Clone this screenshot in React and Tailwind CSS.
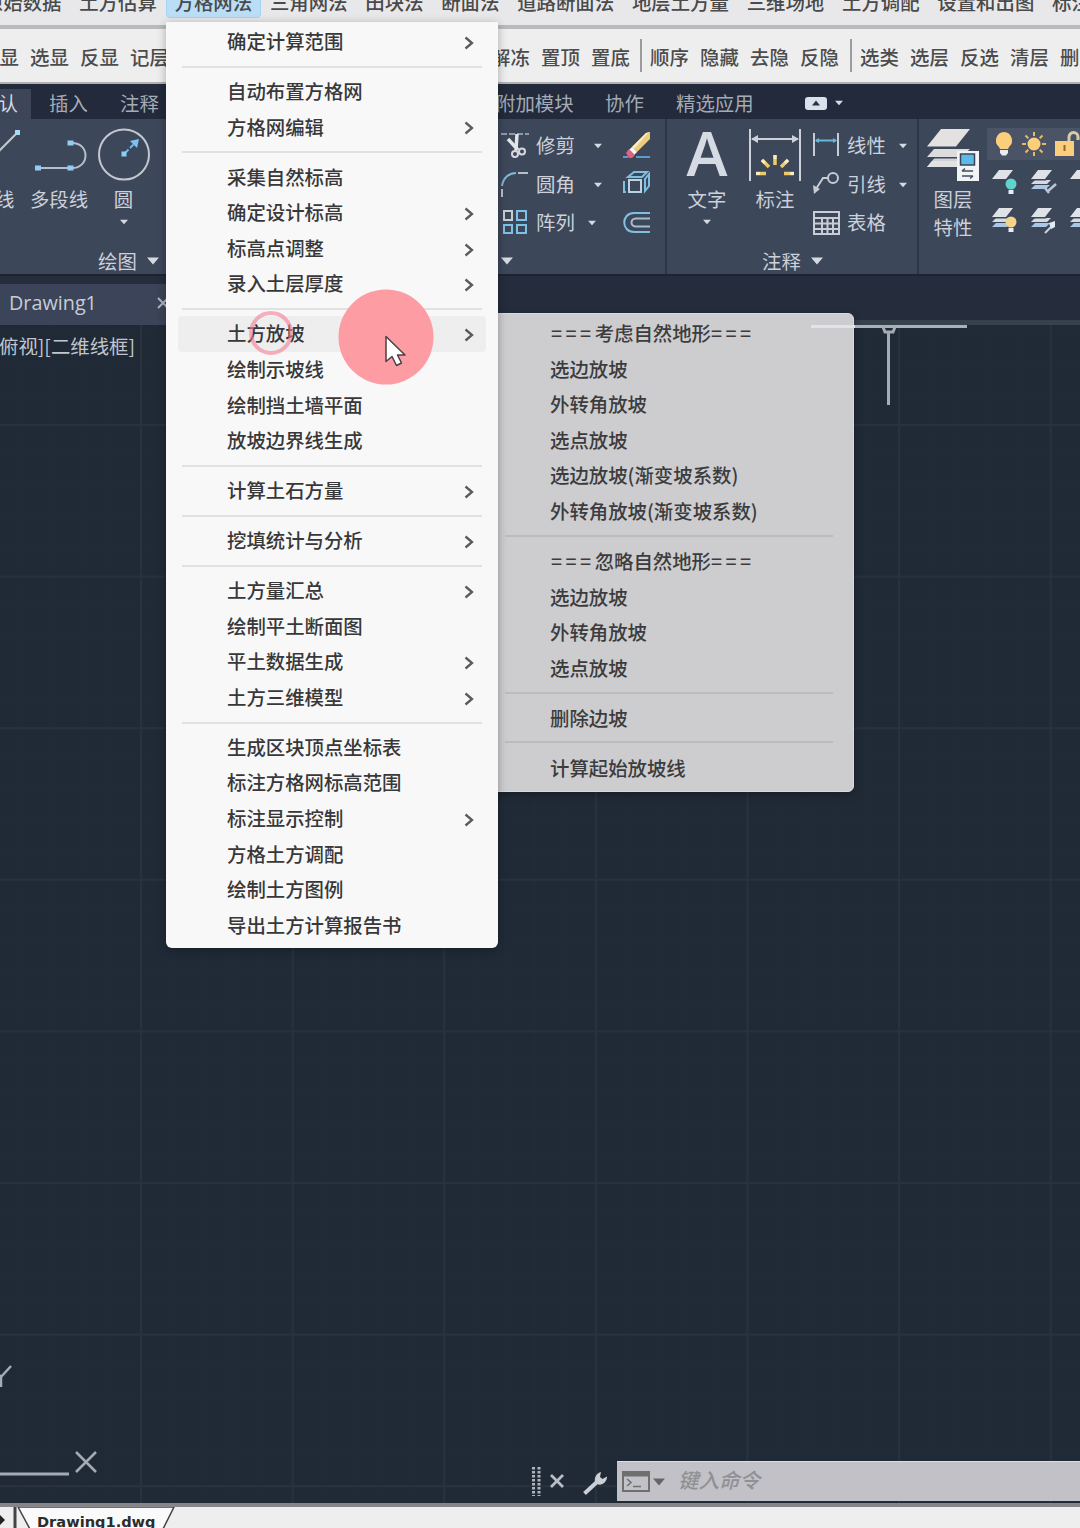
import React from 'react';
import clsx from 'clsx';

const menuBar = [
  '原始数据', '土方估算', '方格网法', '三角网法', '田块法', '断面法',
  '道路断面法', '地层土方量', '三维场地', '土方调配', '设置和出图', '标注',
];

const toolGroups = [
  { id: 'show', className: '-ml-5 w-[511px]', items: ['全显', '选显', '反显', '记层'] },
  { id: 'freeze', className: 'w-[149px]', items: ['解冻', '置顶', '置底'] },
  { id: 'hide', className: 'w-[210px] border-l-2', items: ['顺序', '隐藏', '去隐', '反隐'] },
  { id: 'layer', className: 'w-[260px] border-l-2', items: ['选类', '选层', '反选', '清层', '删除'] },
];

// each inner array is a block between two separators, "sub" rows open a submenu
const gridMenu = [
  [{ label: '确定计算范围', sub: true }],
  [{ label: '自动布置方格网' }, { label: '方格网编辑', sub: true }],
  [
    { label: '采集自然标高' },
    { label: '确定设计标高', sub: true },
    { label: '标高点调整', sub: true },
    { label: '录入土层厚度', sub: true },
  ],
  [
    { label: '土方放坡', sub: true, active: true },
    { label: '绘制示坡线' },
    { label: '绘制挡土墙平面' },
    { label: '放坡边界线生成' },
  ],
  [{ label: '计算土石方量', sub: true }],
  [{ label: '挖填统计与分析', sub: true }],
  [
    { label: '土方量汇总', sub: true },
    { label: '绘制平土断面图' },
    { label: '平土数据生成', sub: true },
    { label: '土方三维模型', sub: true },
  ],
  [
    { label: '生成区块顶点坐标表' },
    { label: '标注方格网标高范围' },
    { label: '标注显示控制', sub: true },
    { label: '方格土方调配' },
    { label: '绘制土方图例' },
    { label: '导出土方计算报告书' },
  ],
];

const slopeMenu = [
  { title: '考虑自然地形', items: ['选边放坡', '外转角放坡', '选点放坡', '选边放坡(渐变坡系数)', '外转角放坡(渐变坡系数)'] },
  { title: '忽略自然地形', items: ['选边放坡', '外转角放坡', '选点放坡'] },
  { items: ['删除边坡'] },
  { items: ['计算起始放坡线'] },
];

const Caret = ({ big, className }) => (
  <svg className={clsx('shrink-0', className)} width={big ? 12 : 8} height={big ? 8 : 6} viewBox="0 0 12 8">
    <path d="M0 0.5h12L6 7.5z" fill="#d5dae2" />
  </svg>
);

const MenuBar = () => (
  <div className="flex h-[25px] overflow-hidden bg-[#e8e8ea] font-medium text-[#4a4a4a]">
    <div className="-mt-[14px] -ml-[25px] flex h-8 shrink-0">
      {menuBar.map((name) => (
        <div
          key={name}
          className={clsx(
            'flex shrink-0 items-center border px-[7.9px]',
            name === '方格网法' ? 'rounded border-[#a5d3f0] bg-[#b9def6]' : 'border-transparent'
          )}
        >
          {name}
        </div>
      ))}
    </div>
  </div>
);

const ToolBar = () => (
  <div className="flex h-[59px] items-center overflow-hidden border-t-4 border-b-2 border-t-[#bababa] border-b-[#b0b0b2] bg-[#eeeeef] font-medium text-[#4c4c4c]">
    {toolGroups.map((group) => (
      <div key={group.id} className={clsx('flex h-[33px] shrink-0 items-center border-[#9c9c9e]', group.className)}>
        {group.className.includes('border-l-2') && <div className="w-2 shrink-0" />}
        {group.items.map((item) => (
          <div key={item} className="w-[50px] shrink-0 pt-[2px]">{item}</div>
        ))}
      </div>
    ))}
  </div>
);

const RibbonTabs = () => (
  <div className="flex h-[35px] items-end overflow-hidden bg-[#222a3b] text-[#a5abb6]">
    <div className="-ml-[21px] flex h-[30px] w-[52px] shrink-0 items-center bg-[#3d4558] pb-0.5 text-[#d5d9e0]">默认</div>
    <div className="flex h-[30px] items-center pb-0.5">
      <div className="ml-[18px] w-[71px]">插入</div>
      <div className="w-[376px]">注释</div>
      <div className="w-[109px]">附加模块</div>
      <div className="w-[71px]">协作</div>
      <div className="w-[129px]">精选应用</div>
      <svg width="22" height="13" viewBox="0 0 22 13">
        <rect width="22" height="13" rx="3" fill="#d9e2ec" />
        <path d="M7 8.5h8l-4-5z" fill="#2a3345" />
      </svg>
      <Caret className="ml-2" />
    </div>
  </div>
);

const PanelFooter = ({ label, className }) => (
  <div className={clsx('mt-auto flex h-[27px] items-center gap-2.5', className)}>
    {label}
    <Caret big />
  </div>
);

const BigButton = ({ icon, label, caret, className }) => (
  <div className={clsx('flex shrink-0 flex-col items-center', className)}>
    <div className="flex h-[54px] items-center">{icon}</div>
    <div className="mt-[3px] leading-[28px] whitespace-nowrap">{label}</div>
    {caret && <Caret className="mt-1.5" />}
  </div>
);

const LineIcon = () => (
  <svg width="54" height="54" viewBox="-32 0 54 54" fill="none">
    <path d="M-14 36L17 5" stroke="#c3c8d0" strokeWidth="2" />
    <rect x="15" y="2" width="5" height="5" fill="#a9d8f5" />
  </svg>
);

const PolylineIcon = () => (
  <svg width="56" height="54" viewBox="0 0 56 54" fill="none">
    <path d="M6 40h32M41 15c18 0 18 25 0 25" stroke="#b7bec9" strokeWidth="2" />
    <path d="M4 37.500h6v5h-6zM36.500 37.500h6v5h-6zM36.500 12.500h6v5h-6z" fill="#8fcdf5" />
  </svg>
);

const CircleIcon = () => (
  <svg width="54" height="54" viewBox="0 0 54 54" fill="none">
    <circle cx="27" cy="26.500" r="25" stroke="#c3c8d0" strokeWidth="2" />
    <path d="M28 25l9-9" stroke="#6fb7ea" strokeWidth="2" strokeDasharray="5 2" />
    <path d="M33 13l9-2-2 9z" fill="#7cc3f2" />
    <rect x="24.500" y="23.500" width="5" height="5" fill="#8fcdf5" />
  </svg>
);

const TextIcon = () => (
  <span className="pb-[6px] font-['Open_Sans','Noto_Sans',sans-serif] text-[62px] leading-[54px] font-semibold text-[#d6dae3]">A</span>
);

const DimensionIcon = () => (
  <svg width="52" height="54" viewBox="0 0 52 54" fill="none">
    <path d="M1 1v52M51 1v52M3 11h46" stroke="#ccd1da" strokeWidth="2" />
    <path d="M2 11l7-4v8zM50 11l-7-4v8z" fill="#ccd1da" />
    <path d="M26 27v10M13 32l7 7M39 32l-7 7M7 45.500h10M35 45.500h10" stroke="#eecb68" strokeWidth="3.500" />
    <path d="M26 27v4M13 32l3 3M39 32l-3 3M7 45.500h4M41 45.500h4" stroke="#f8ecc0" strokeWidth="3" />
  </svg>
);

const LayerPropsIcon = () => (
  <svg width="54" height="54" viewBox="0 0 54 54">
    <path d="M1 39l10-12h34L32 39z" fill="#cfd2d6" />
    <path d="M1 39l5-6h34l-7 6z" fill="#e2e2e2" />
    <path d="M1 30.500l8-9h36l-9 9z" fill="#3d475a" />
    <path d="M1 29l7-8h36l-9 8z" fill="#dcdcdc" />
    <path d="M1 21L15 1h30L31 21z" fill="#3d475a" />
    <path d="M1 18.500L15 1h29L30 18.500z" fill="#e4e2e0" />
    <rect x="31" y="23" width="22" height="30" fill="#f2f3f4" />
    <rect x="34.500" y="26" width="14" height="11" fill="#5cb9ea" stroke="#3a4658" strokeWidth="1.500" />
    <path d="M36 43h11M36 43l3-2.500M36 48h11M47 48l-3 2.500" stroke="#414b5c" strokeWidth="1.500" fill="none" />
  </svg>
);

const TrimIcon = () => (
  <svg width="28" height="28" viewBox="0 0 28 28" fill="none">
    <path d="M0 2h28" stroke="#aeb5c0" strokeWidth="1.500" strokeDasharray="6 2" />
    <path d="M7 7l10 11M16 2l-1 16" stroke="#e1e4e9" strokeWidth="3.500" />
    <circle cx="14" cy="22" r="3" stroke="#d5d9df" strokeWidth="2" />
    <circle cx="21" cy="19.500" r="3" stroke="#d5d9df" strokeWidth="2" />
  </svg>
);

const FilletIcon = () => (
  <svg width="28" height="28" viewBox="0 0 28 28" fill="none" strokeWidth="2">
    <path d="M1 15C2 7 8 2 15 2" stroke="#7fb9d6" />
    <path d="M17 2h10M1 18v8" stroke="#b9bfc9" />
  </svg>
);

const ArrayIcon = () => (
  <svg width="28" height="28" viewBox="0 0 28 28" fill="none" strokeWidth="2">
    <rect x="3" y="2" width="8" height="9" stroke="#c9cdd4" />
    <path d="M16 2h9v9h-9zM3 16h8v8H3zM16 16h9v8h-9z" stroke="#7fc0e6" />
  </svg>
);

const EraserIcon = () => (
  <svg width="28" height="28" viewBox="0 0 28 28">
    <path d="M9 15L23 1l4-2v8L14 20z" fill="#efcb7c" />
    <path d="M9 15L23 1l2 0L11 17z" fill="#faeec8" />
    <path d="M6 18l3-3 5 5-3 3z" fill="#fff" />
    <path d="M3 21l3-4 6 6-3 3H6z" fill="#e0647c" />
    <path d="M0 25h5M13 25h14" stroke="#5e9ad2" strokeWidth="2" />
  </svg>
);

const ExplodeIcon = () => (
  <svg width="28" height="28" viewBox="0 0 28 28" fill="none" stroke="#7fbfe2" strokeWidth="2">
    <rect x="6" y="10" width="12" height="12" stroke="#b9d3e2" />
    <path d="M5 7l6-5h13l-5 5zM22 9l4-5v12l-4 5zM1 11v11h2" />
  </svg>
);

const OffsetIcon = () => (
  <svg width="28" height="28" viewBox="0 0 28 28" fill="none" strokeWidth="2">
    <path d="M27 4H11c-13 0-13 19 0 19h16" stroke="#7fbfe2" />
    <path d="M27 9.500H13c-6 0-6 8 0 8h14" stroke="#a9bccb" />
  </svg>
);

const LinearIcon = () => (
  <svg width="28" height="28" viewBox="0 0 28 28" fill="none" strokeWidth="2">
    <path d="M2 1v23M26 1v23" stroke="#c6cbd4" />
    <path d="M4 8.500h20" stroke="#6ab6da" />
    <path d="M3 8.500l4-2.500v5zM25 8.500l-4-2.500v5z" fill="#6ab6da" />
  </svg>
);

const LeaderIcon = () => (
  <svg width="28" height="28" viewBox="0 0 28 28" fill="none" stroke="#c6cbd4" strokeWidth="2">
    <circle cx="21" cy="7" r="5" />
    <path d="M16 7h-5L4 18" />
    <path d="M1 14l7 4-6 5z" fill="#c6cbd4" stroke="none" />
  </svg>
);

const TableIcon = () => (
  <svg width="28" height="28" viewBox="0 0 28 28" fill="none" stroke="#c9ced6" strokeWidth="2">
    <path d="M2 3h25v22H2zM2 9h25M2 14.500h25M2 20h25M10 9v16M15.500 9v16M21 9v16" />
  </svg>
);

const BulbIcon = () => (
  <svg width="20" height="26" viewBox="0 0 20 26">
    <path d="M10 1a8.500 8.500 0 0 1 5 15l-1 2H6l-1-2a8.500 8.500 0 0 1 5-15z" fill="#fbce7c" />
    <path d="M6 19h8v3l-2 2.500H8L6 22z" fill="#e8edf2" />
  </svg>
);

const SunIcon = () => (
  <svg width="24" height="24" viewBox="0 0 24 24">
    <circle cx="12" cy="12" r="6.500" fill="#fbce7c" />
    <path
      d="M12 0v4M12 20v4M0 12h4M20 12h4M3.500 3.500l2.800 2.800M17.700 17.700l2.800 2.800M3.500 20.500l2.800-2.800M17.700 6.300l2.800-2.800"
      stroke="#e9b964"
      strokeWidth="2"
    />
  </svg>
);

const LockIcon = () => (
  <svg className="shrink-0" width="26" height="26" viewBox="0 0 26 26">
    <path d="M15 11V6a4.500 4.500 0 0 1 9 0v3" fill="none" stroke="#d8c9a8" strokeWidth="3" />
    <rect x="1" y="10" width="19" height="15" fill="#fbce7c" />
    <path d="M10.500 14v6" stroke="#8a6a34" strokeWidth="2" />
  </svg>
);

const LayerIcon = ({ single, badge }) => (
  <svg className="shrink-0" width="28" height="28" viewBox="0 0 28 28">
    {!single && (
      <>
        <path d="M1 21l4-4h15l-4 4z" fill="#a9c8e6" />
        <path d="M1 16l4-4h16l-4 4z" fill="#d3dae2" />
        <path d="M1 12.500L9 2h14l-7 10.500z" fill="#3d475a" />
      </>
    )}
    <path d="M1 11L8 2h14l-7 9z" fill="#dfe3e8" />
    {badge === 'off' && <circle cx="20" cy="16" r="5.500" fill="#5fd4cf" />}
    {badge === 'on' && <circle cx="20" cy="16" r="5.500" fill="#f5d489" />}
    {(badge === 'off' || badge === 'on') && <path d="M17.500 22h5v4h-5z" fill="#e8edf2" />}
    {badge === 'brush' && <path d="M15 20l4 5M18 23l8-7" stroke="#b9c6d4" strokeWidth="2.500" />}
    {badge === 'pin' && (
      <>
        <path d="M15 27l8-8" stroke="#c8d3df" strokeWidth="2" />
        <path d="M19 17l6-2v6l-4 2z" fill="#dfeaf5" />
      </>
    )}
  </svg>
);

const SmallRow = ({ icon, label, className, caret = true }) => (
  <div className="flex h-[38.5px] items-center">
    {icon}
    <span className={clsx('ml-[7px] pb-[3px]', className)}>{label}</span>
    {caret && <Caret />}
  </div>
);

const Ribbon = () => (
  <div className="flex h-[155px] overflow-hidden bg-[#3d475a] text-[#ccd1da]">
    <div className="flex w-[498px] shrink-0 flex-col">
      <div className="-ml-8 flex pt-[9px]">
        <BigButton className="w-[54px]" icon={<LineIcon />} label="直线" />
        <BigButton className="w-[74px]" icon={<PolylineIcon />} label="多段线" />
        <BigButton className="w-[55px]" icon={<CircleIcon />} label="圆" caret />
      </div>
      <PanelFooter label="绘图" className="pl-[98px]" />
    </div>

    <div className="flex w-[169px] shrink-0 flex-col border-r-2 border-[#2c3547]">
      <div className="flex pt-2 pl-[3px]">
        <div className="w-[122px]">
          <SmallRow icon={<TrimIcon />} label="修剪" className="w-[58px]" />
          <SmallRow icon={<FilletIcon />} label="圆角" className="w-[58px]" />
          <SmallRow icon={<ArrayIcon />} label="阵列" className="w-[52px]" />
        </div>
        <div>
          {[EraserIcon, ExplodeIcon, OffsetIcon].map((Icon, i) => (
            <div key={i} className="flex h-[38.5px] items-center pb-px"><Icon /></div>
          ))}
        </div>
      </div>
      <PanelFooter className="pl-[3px]" />
    </div>

    <div className="flex w-[252px] shrink-0 flex-col border-r-2 border-[#2c3547]">
      <div className="flex">
        <BigButton className="mt-[9px] ml-[10px] w-[60px]" icon={<TextIcon />} label="文字" caret />
        <BigButton className="mt-[9px] ml-[8px] w-[60px]" icon={<DimensionIcon />} label="标注" />
        <div className="ml-[7px] pt-2">
          <SmallRow icon={<LinearIcon />} label="线性" className="w-[52px]" />
          <SmallRow icon={<LeaderIcon />} label="引线" className="w-[52px]" />
          <SmallRow icon={<TableIcon />} label="表格" caret={false} />
        </div>
      </div>
      <PanelFooter label="注释" className="pl-[95px]" />
    </div>

    <div className="flex shrink-0 pt-[9px]">
      <BigButton className="ml-[4px] w-[60px]" icon={<LayerPropsIcon />} label={<>图层<br />特性</>} />
      <div className="ml-1 w-[110px] overflow-hidden">
        <div className="flex h-8 items-center gap-[8px] bg-[#4b5466] pl-[7px]">
          <BulbIcon />
          <SunIcon />
          <LockIcon />
        </div>
        <div className="mt-2 flex h-[38px] gap-[11px] pl-1">
          <LayerIcon single badge="off" />
          <LayerIcon badge="brush" />
          <LayerIcon single />
        </div>
        <div className="flex h-[38px] gap-[11px] pl-1">
          <LayerIcon badge="on" />
          <LayerIcon badge="pin" />
          <LayerIcon />
        </div>
      </div>
    </div>
  </div>
);

const DocTabs = () => (
  <div className="flex h-[51px] items-end border-t-2 border-[#1c2434] bg-[#252d3d]">
    <div className="flex h-[41px] w-[190px] items-center bg-[#3b4458] pb-1 pl-[9px] font-['Open_Sans','Noto_Sans',sans-serif] text-[19.8px] text-[#c7ccd6]">
      Drawing1
      <svg className="ml-[60px]" width="12" height="12" viewBox="0 0 12 12">
        <path d="M1 1l10 10M11 1L1 11" stroke="#aeb5c0" strokeWidth="2" />
      </svg>
    </div>
    <div className="h-[5px] flex-1 bg-[#36414e]" />
  </div>
);

const Drawing = () => (
  <svg className="absolute inset-0" width="1080" height="1178" fill="none">
    <defs>
      <pattern id="minor" width="30.320" height="30.320" patternUnits="userSpaceOnUse" x="19" y="8">
        <path d="M0 0.500h30.320M0.500 0v30.320" stroke="#212b37" />
      </pattern>
      <pattern id="major" width="151.600" height="151.600" patternUnits="userSpaceOnUse" x="140" y="99">
        <path d="M0 1h151.600M1 0v151.600" stroke="#28323d" strokeWidth="2" />
      </pattern>
    </defs>
    <rect width="1080" height="1178" fill="url(#minor)" />
    <rect width="1080" height="1178" fill="url(#major)" />
    {/* UCS axes */}
    <path d="M0 1149h69" stroke="#a4abb4" strokeWidth="3" />
    <path d="M76 1127l20 20M96 1127l-20 20M11 1041L1 1052M-9 1041L1 1052v10" stroke="#a4abb4" strokeWidth="2.500" />
  </svg>
);

const CommandLine = () => (
  <div className="relative mb-[2px] flex h-[40px] items-center pl-[532px]">
    <svg width="9" height="29" viewBox="0 0 9 29">
      <path d="M1.500 0v29M7 0v29" stroke="#aeb4bc" strokeWidth="3" strokeDasharray="2.500 1.500" />
    </svg>
    <svg className="ml-2" width="16" height="16" viewBox="0 0 16 16">
      <path d="M2 2l12 12M14 2L2 14" stroke="#b9bec6" strokeWidth="2.800" />
    </svg>
    <svg className="mt-1 ml-[18px]" width="24" height="24" viewBox="0 0 24 24">
      <path d="M1.500 22.500L14 11" stroke="#ccd0d6" strokeWidth="4" />
      <path d="M12 11c-1-5 2-9 6-10l-1 5 2.500 2L24 5.500c0 5-4 9-9 8z" fill="#ccd0d6" />
    </svg>
    <div className="ml-[10px] flex h-full flex-1 items-center border-t border-[#dcdce2] bg-[#c1c1c7] pl-[5px]">
      <svg width="28" height="21" viewBox="0 0 28 21" fill="none" stroke="#6e706f">
        <rect x="1" y="1" width="26" height="19" strokeWidth="2" />
        <path d="M1 3.500h26" strokeWidth="4" />
        <path d="M5 8l4 3.500L5 15M11 15.500h8" strokeWidth="1.500" />
      </svg>
      <svg className="ml-[3px]" width="12" height="8" viewBox="0 0 12 8">
        <path d="M0 0.500h12L6 7.500z" fill="#666" />
      </svg>
      <span className="ml-[13px] pb-1 text-[20.5px] font-medium text-[#909094] italic">键入命令</span>
    </div>
  </div>
);

const SheetTabs = () => (
  <div className="flex h-[25px] shrink-0 overflow-hidden border-t-4 border-[#85858a] bg-[#eeeeef]">
    <svg width="17" height="24" viewBox="0 0 17 24">
      <path d="M0 8l5 5-5 5z" fill="#222" />
      <path d="M15 0v24" stroke="#444" strokeWidth="3" />
    </svg>
    <div className="relative h-6 w-[160px]">
      <svg className="absolute inset-0" width="160" height="24" viewBox="0 0 160 24">
        <path d="M1 0l13 24h131L157 0z" fill="#fafafa" stroke="#444" strokeWidth="1.500" />
      </svg>
      <span className="relative pl-5 font-['DejaVu_Sans',sans-serif] text-[14.6px] leading-[29px] font-semibold text-[#2c2c2c]">Drawing1.dwg</span>
    </div>
  </div>
);

const GridMenu = () => (
  <div className="absolute top-[22px] left-[166px] h-[926px] w-[332px] rounded-b-md bg-[#f8f8f9] pt-[2px] font-medium text-[#38383a] shadow-[0_2px_10px_rgba(0,0,0,0.3)]">
    {gridMenu.map((block, i) => (
      <React.Fragment key={i}>
        {i > 0 && <div className="mx-4 my-[6.2px] h-[2px] bg-[#e1e1e2]" />}
        {block.map((item) => (
          <div
            key={item.label}
            className={clsx(
              'mx-3 flex h-[35.6px] items-center justify-between rounded pr-3 pl-[49px]',
              item.active && 'bg-[#eeeeef]'
            )}
          >
            <span className="pb-[2px]">{item.label}</span>
            {item.sub && (
              <svg className="mt-0.5" width="10" height="14" viewBox="0 0 10 14" fill="none">
                <path d="M1.500 1.500L8 7l-6.500 5.500" stroke="#5a5a5c" strokeWidth="2.300" />
              </svg>
            )}
          </div>
        ))}
      </React.Fragment>
    ))}
  </div>
);

const SlopeMenu = () => (
  <div className="absolute top-[313px] left-[488px] h-[479px] w-[366px] rounded-md border border-[#dadae0] bg-[#cdcdcf] pt-px font-medium text-[#3c3c3e] shadow-[0_2px_8px_rgba(0,0,0,0.3)]">
    {slopeMenu.map((block, i) => (
      <React.Fragment key={i}>
        {i > 0 && <div className="mr-5 ml-4 my-[6.2px] h-[2px] bg-[#bcbcbe]" />}
        {block.title && (
          <div className="flex h-[35.6px] items-center pl-[62px]">
            <span className="tracking-[3.5px]">===</span>
            {block.title}
            <span className="tracking-[3.5px]">===</span>
          </div>
        )}
        {block.items.map((item) => (
          <div key={item} className="flex h-[35.6px] items-center pl-[61px]">{item}</div>
        ))}
      </React.Fragment>
    ))}
  </div>
);

// click marker and mouse arrow, drawn above everything
const Pointer = () => (
  <>
    <svg className="absolute top-[310px] left-[248px]" width="46" height="46" viewBox="0 0 46 46">
      <circle cx="23" cy="23" r="20" fill="none" stroke="#f77d92" strokeOpacity="0.6" strokeWidth="4" />
    </svg>
    <svg className="absolute top-[289px] left-[338px]" width="96" height="96" viewBox="0 0 96 96">
      <circle cx="48" cy="48" r="47.500" fill="#fd9ca2" />
      <path d="M48 47.500v25l6-5 4.500 9 5-2.500-4-8h7.500z" fill="#fff" stroke="#4a3f42" strokeWidth="1.500" strokeLinejoin="round" />
    </svg>
    <svg className="absolute top-[322px] left-[810px]" width="160" height="84" viewBox="0 0 160 84" fill="none" stroke="#a4abb3">
      <path d="M1 4.500h44" stroke="#e2e3ea" strokeWidth="3" />
      <path d="M45 4.500h112" stroke="#a9b0b8" strokeWidth="3" />
      <path d="M73 5l2 5h8l2-5M78.500 10v73" strokeWidth="3" />
    </svg>
  </>
);

export default function App() {
  return (
    <div className="relative flex h-[1528px] w-[1080px] flex-col overflow-hidden bg-[#202a36] font-['Noto_Sans_CJK_SC',sans-serif] text-[19.4px] leading-none whitespace-nowrap">
      <MenuBar />
      <ToolBar />
      <RibbonTabs />
      <Ribbon />
      <DocTabs />
      <div className="relative flex flex-1 flex-col justify-between bg-[#202a36] text-[#c0c6ce]">
        <Drawing />
        <div className="relative -ml-px pt-[11px]">俯视][二维线框]</div>
        <CommandLine />
      </div>
      <SheetTabs />

      <SlopeMenu />
      <GridMenu />
      <Pointer />
    </div>
  );
}
